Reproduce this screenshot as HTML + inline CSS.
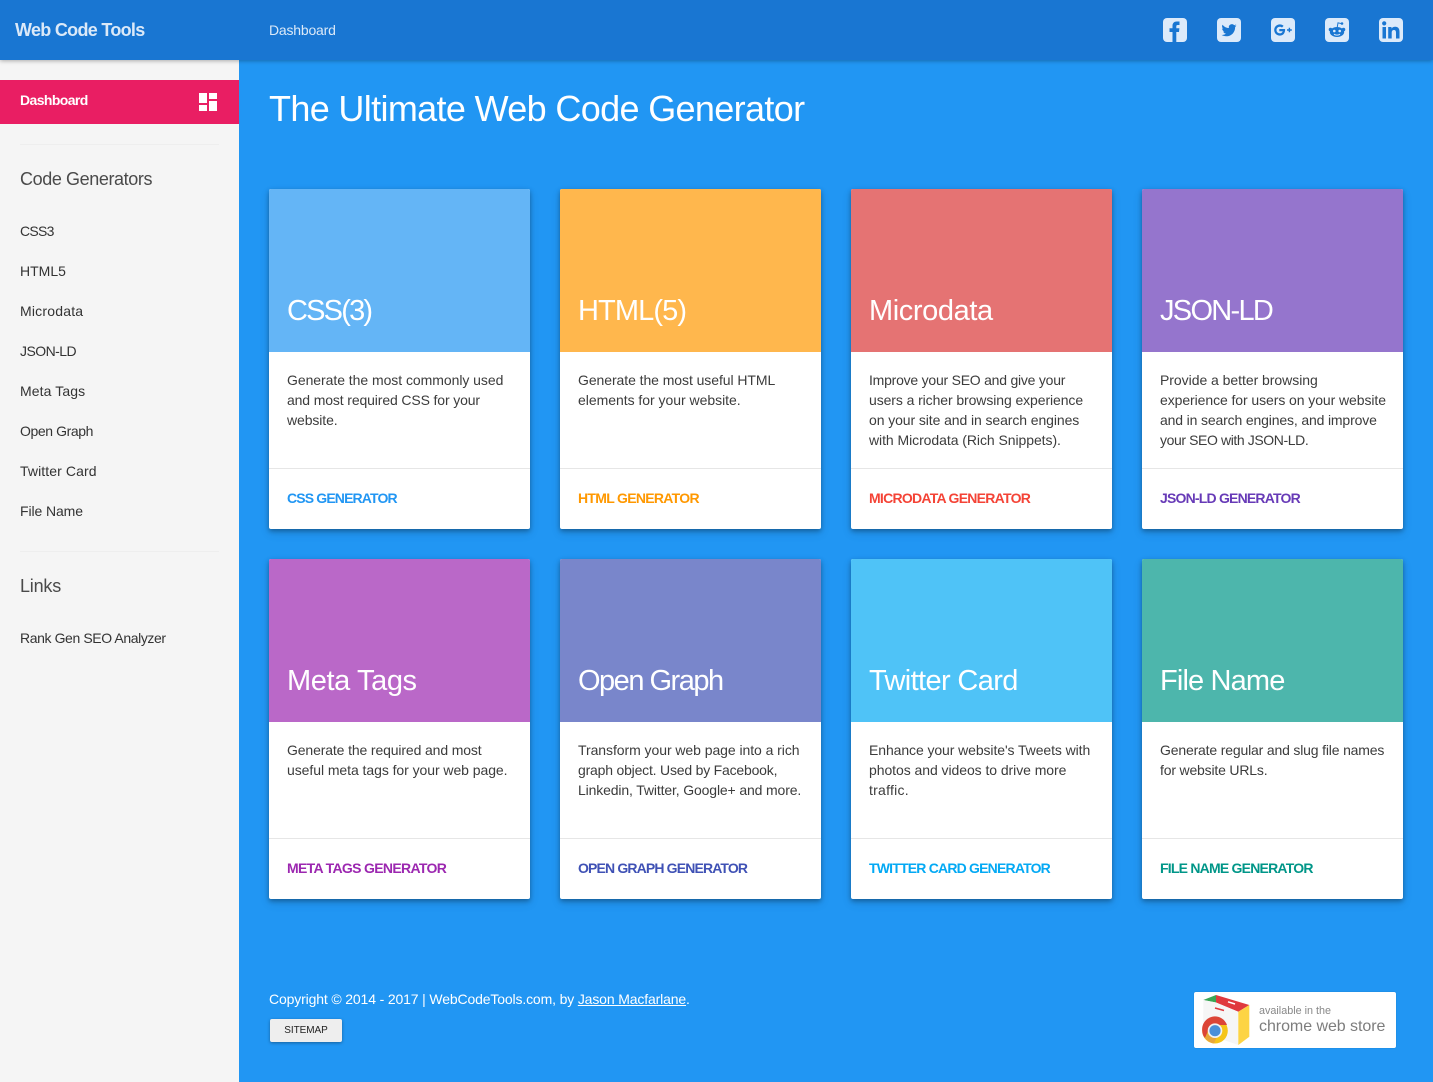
<!DOCTYPE html>
<html lang="en"><head><meta charset="utf-8"><title>Web Code Tools</title>
<style>
*{box-sizing:border-box}
html,body{margin:0;padding:0;width:1433px;height:1082px;overflow:hidden;background:#2196f3;font-family:"Liberation Sans",Arial,sans-serif}
a{text-decoration:none;color:inherit}
.abs{position:absolute;white-space:nowrap}
#top{position:absolute;left:0;top:0;width:1433px;height:60px;background:#1976d2;box-shadow:0 1px 4px rgba(0,0,0,.3);z-index:3}
#side{position:absolute;left:0;top:60px;width:239px;height:1022px;background:#f5f5f5;z-index:2}
.nav{position:absolute;left:20px;font-size:14px;line-height:20px;color:#333;white-space:nowrap}
.hd{position:absolute;left:20px;font-size:18px;line-height:24px;color:#4a4a4a;white-space:nowrap}
.hr{position:absolute;left:20px;width:199px;height:1px;background:#eeeeee}
.card{position:absolute;width:261px;height:340px;background:#fff;border-radius:2px;box-shadow:0 2px 5px rgba(0,0,0,.3),0 4px 10px rgba(0,0,0,.12)}
.ct{position:absolute;left:0;top:0;width:261px;height:163px;border-radius:2px 2px 0 0}
.ct span{position:absolute;left:18px;top:104px;font-size:29px;line-height:36px;color:#fff;white-space:nowrap}
.cb{position:absolute;left:18px;top:181px;font-size:14px;line-height:20px;color:#3c3c3c;white-space:nowrap}
.cl{position:absolute;left:0;top:279px;width:261px;height:1px;background:#e6e6e6}
.cf{position:absolute;left:18px;top:299px;font-size:14px;line-height:20px;font-weight:700;white-space:nowrap}
.ic{position:absolute;top:18px;width:24px;height:24px}
</style></head><body>
<div id="top">
<div class="abs" style="left:15px;top:18px;font-size:18px;line-height:24px;font-weight:700;color:#dbe9f8;letter-spacing:-.7px">Web Code Tools</div>
<div class="abs" style="left:269px;top:20px;font-size:14px;line-height:20px;color:#dbe9f8;letter-spacing:-.2px">Dashboard</div>
<svg class="ic" style="left:1163px" viewBox="0 0 24 24"><rect width="24" height="24" rx="4" fill="#dceafa"/><path d="M9.500 24V14H6.500V10.300H9.500V7.800C9.500 5 11.200 3.500 13.700 3.500H16.500V7H14.700C13.600 7 13.300 7.600 13.300 8.400V10.300H16.400L16 14H13.300V24Z" fill="#1976d2"/></svg>
<svg class="ic" style="left:1217px" viewBox="0 0 24 24"><rect width="24" height="24" rx="4" fill="#dceafa"/><path d="M19.600 7.600c-.6.3-1.200.4-1.800.5.7-.4 1.100-1 1.400-1.700-.6.4-1.300.6-2 .8a3.100 3.100 0 0 0-5.300 2.800c-2.600-.1-4.900-1.400-6.400-3.300-.8 1.400-.4 3.200 1 4.100-.5 0-1-.2-1.400-.4 0 1.500 1.100 2.800 2.500 3.100-.5.1-.9.1-1.400 0 .4 1.200 1.500 2.100 2.900 2.100a6.300 6.300 0 0 1-4.600 1.300c1.400.9 3 1.400 4.800 1.400 5.800 0 9-4.900 8.800-9.200.6-.5 1.100-1 1.500-1.700z" fill="#1976d2"/></svg>
<svg class="ic" style="left:1271px" viewBox="0 0 24 24"><rect width="24" height="24" rx="4" fill="#dceafa"/><path d="M8.300 11V13.200H11.700C11.400 14.500 10.300 15.300 8.800 15.300 6.900 15.300 5.500 13.900 5.500 12 5.500 10.100 7 8.700 8.800 8.700 9.700 8.700 10.400 9 11 9.500L12.600 7.900C11.600 7 10.300 6.400 8.800 6.400 5.700 6.400 3.200 8.900 3.200 12 3.200 15.100 5.700 17.600 8.800 17.600 12.200 17.600 14.300 15.100 14.100 11Z" fill="#1976d2"/><path d="M17.700 9.700H19.100V11.300H20.800V12.700H19.100V14.300H17.700V12.700H16V11.300H17.700Z" fill="#1976d2"/></svg>
<svg class="ic" style="left:1325px" viewBox="0 0 24 24"><rect width="24" height="24" rx="4" fill="#dceafa"/><ellipse cx="12" cy="14" rx="7.200" ry="5" fill="#1976d2"/><circle cx="5.500" cy="11.500" r="1.800" fill="#1976d2"/><circle cx="18.500" cy="11.500" r="1.800" fill="#1976d2"/><circle cx="9.300" cy="13" r="1.300" fill="#dceafa"/><circle cx="14.700" cy="13" r="1.300" fill="#dceafa"/><path d="M9 16.200C10.500 17.400 13.500 17.400 15 16.200" stroke="#dceafa" stroke-width="1" fill="none"/><path d="M12.200 9.500L13 4.800 16.500 5.600" stroke="#1976d2" stroke-width="1" fill="none"/><circle cx="17" cy="5.500" r="1.300" fill="#1976d2"/></svg>
<svg class="ic" style="left:1379px" viewBox="0 0 24 24"><rect width="24" height="24" rx="4" fill="#dceafa"/><rect x="3.500" y="9" width="3.500" height="11.500" fill="#1976d2"/><circle cx="5.200" cy="5.400" r="2.100" fill="#1976d2"/><path d="M9.200 9H12.500V10.600C13.100 9.500 14.400 8.700 16 8.700 19.300 8.700 20.500 10.800 20.500 14V20.500H17V14.700C17 13.100 16.500 12 15 12 13.400 12 12.700 13.100 12.700 14.700V20.500H9.200Z" fill="#1976d2"/></svg>
</div>

<div id="side">
<div style="position:absolute;left:0;top:20px;width:239px;height:44px;background:#e91e63"></div>
<div class="abs" style="left:20px;top:30px;font-size:14px;line-height:20px;font-weight:700;color:#fff;letter-spacing:-.6px">Dashboard</div>
<svg style="position:absolute;left:199px;top:33px" width="18" height="18" viewBox="0 0 18 18"><path d="M0 0H8V10H0ZM0 12H8V18H0ZM10 18H18V8H10ZM10 0V6H18V0Z" fill="#fff"/></svg>
<div class="hr" style="top:84px"></div>
<div class="hd" style="top:107px;letter-spacing:-.4px">Code Generators</div>
<div class="nav" style="top:161px;letter-spacing:-.7px">CSS3</div>
<div class="nav" style="top:201px">HTML5</div>
<div class="nav" style="top:241px;letter-spacing:.2px">Microdata</div>
<div class="nav" style="top:281px;letter-spacing:-.55px">JSON-LD</div>
<div class="nav" style="top:321px;letter-spacing:.1px">Meta Tags</div>
<div class="nav" style="top:361px;letter-spacing:-.4px">Open Graph</div>
<div class="nav" style="top:401px;letter-spacing:.1px">Twitter Card</div>
<div class="nav" style="top:441px;letter-spacing:-.1px">File Name</div>
<div class="hr" style="top:491px"></div>
<div class="hd" style="top:514px;letter-spacing:-.2px">Links</div>
<div class="nav" style="top:568px;letter-spacing:-.4px">Rank Gen SEO Analyzer</div>
</div>

<div class="abs" style="left:269px;top:86px;font-size:36px;line-height:46px;color:#fff;letter-spacing:-.65px">The Ultimate Web Code Generator</div>

<div class="card" style="left:269px;top:189px"><div class="ct" style="background:#64b5f6"><span style="letter-spacing:-1.800px">CSS(3)</span></div><div class="cb"><span style="letter-spacing:-.05px">Generate the most commonly used</span><br><span style="letter-spacing:-.13px">and most required CSS for your</span><br><span style="letter-spacing:-.1px">website.</span></div><div class="cl"></div><div class="cf" style="color:#2196f3;letter-spacing:-.85px">CSS GENERATOR</div></div>
<div class="card" style="left:560px;top:189px"><div class="ct" style="background:#ffb74d"><span style="letter-spacing:-.9px">HTML(5)</span></div><div class="cb"><span style="letter-spacing:-.07px">Generate the most useful HTML</span><br><span style="letter-spacing:-.03px">elements for your website.</span></div><div class="cl"></div><div class="cf" style="color:#ff9800;letter-spacing:-.7px">HTML GENERATOR</div></div>
<div class="card" style="left:851px;top:189px"><div class="ct" style="background:#e57373"><span style="letter-spacing:-.4px">Microdata</span></div><div class="cb"><span style="letter-spacing:-.23px">Improve your SEO and give your</span><br><span style="letter-spacing:-.09px">users a richer browsing experience</span><br><span style="letter-spacing:-.09px">on your site and in search engines</span><br><span style="letter-spacing:-.06px">with Microdata (Rich Snippets).</span></div><div class="cl"></div><div class="cf" style="color:#f44336;letter-spacing:-.73px">MICRODATA GENERATOR</div></div>
<div class="card" style="left:1142px;top:189px"><div class="ct" style="background:#9575cd"><span style="letter-spacing:-1.700px">JSON-LD</span></div><div class="cb"><span style="letter-spacing:-.04px">Provide a better browsing</span><br><span style="letter-spacing:-.08px">experience for users on your website</span><br><span style="letter-spacing:-.15px">and in search engines, and improve</span><br><span style="letter-spacing:-.4px">your SEO with JSON-LD.</span></div><div class="cl"></div><div class="cf" style="color:#673ab7;letter-spacing:-.8px">JSON-LD GENERATOR</div></div>

<div class="card" style="left:269px;top:559px"><div class="ct" style="background:#ba68c8"><span style="letter-spacing:-.4px">Meta Tags</span></div><div class="cb"><span style="letter-spacing:-.13px">Generate the required and most</span><br><span style="letter-spacing:-.06px">useful meta tags for your web page.</span></div><div class="cl"></div><div class="cf" style="color:#9c27b0;letter-spacing:-.67px">META TAGS GENERATOR</div></div>
<div class="card" style="left:560px;top:559px"><div class="ct" style="background:#7986cb"><span style="letter-spacing:-1.500px">Open Graph</span></div><div class="cb"><span style="letter-spacing:-.06px">Transform your web page into a rich</span><br><span style="letter-spacing:-.2px">graph object. Used by Facebook,</span><br><span style="letter-spacing:-.14px">Linkedin, Twitter, Google+ and more.</span></div><div class="cl"></div><div class="cf" style="color:#3f51b5;letter-spacing:-.85px">OPEN GRAPH GENERATOR</div></div>
<div class="card" style="left:851px;top:559px"><div class="ct" style="background:#4fc3f7"><span style="letter-spacing:-.63px">Twitter Card</span></div><div class="cb"><span style="letter-spacing:-.09px">Enhance your website's Tweets with</span><br><span style="letter-spacing:-.06px">photos and videos to drive more</span><br><span style="letter-spacing:.25px">traffic.</span></div><div class="cl"></div><div class="cf" style="color:#03a9f4;letter-spacing:-.8px">TWITTER CARD GENERATOR</div></div>
<div class="card" style="left:1142px;top:559px"><div class="ct" style="background:#4db6ac"><span style="letter-spacing:-.85px">File Name</span></div><div class="cb"><span style="letter-spacing:-.17px">Generate regular and slug file names</span><br><span style="letter-spacing:-.18px">for website URLs.</span></div><div class="cl"></div><div class="cf" style="color:#009688;letter-spacing:-.78px">FILE NAME GENERATOR</div></div>

<div class="abs" style="left:269px;top:989px;font-size:14px;line-height:20px;color:#fff;letter-spacing:-.145px">Copyright © 2014 - 2017 | WebCodeTools.com, by <a href="#" style="text-decoration:underline">Jason Macfarlane</a>.</div>
<div class="abs" style="left:270px;top:1019px;width:72px;height:23px;background:#eee;border-radius:2px;box-shadow:0 1px 3px rgba(0,0,0,.35);text-align:center;font-size:10px;line-height:23px;color:#222;letter-spacing:-.05px">SITEMAP</div>

<div class="abs" style="left:1194px;top:992px;width:202px;height:56px;background:#fff;border-radius:2px;box-shadow:0 0 1px rgba(0,0,0,.25)">
<svg style="position:absolute;left:0;top:0" width="60" height="56" viewBox="0 0 60 56">
<path d="M9.300 8L22 3V10.500Z" fill="#3aa655"/>
<path d="M22 3L55.300 13 44.300 19.700 22 10.500Z" fill="#e0393e"/>
<path d="M9.300 8L22 10.500 44.300 19.700V53L9.300 41Z" fill="#f6f6f6"/>
<path d="M44.300 19.700L55.300 13V44.700L44.300 53Z" fill="#fdd444"/>
<path d="M34 9.800L41 12" stroke="#fff" stroke-width="1.500"/>
<path d="M21 16L30 18.500" stroke="#e0393e" stroke-width="1.500"/>
<circle cx="21" cy="38.700" r="12.800" fill="#f5c518"/>
<path d="M8.200 38.700A12.800 12.800 0 0 1 33 33L21 33Q15 33 14 39L11 46Q8.200 43 8.200 38.700Z" fill="#dc4537"/>
<path d="M11 46Q14 50.500 20 51.500L23 44.500Q17 45 14 40Z" fill="#e8a63a"/>
<circle cx="21" cy="38.700" r="7.300" fill="#f2f2f2"/>
<circle cx="21" cy="38.700" r="5.600" fill="#4a8fd8"/>
</svg>
<div class="abs" style="left:65px;top:13px;font-size:10.800px;line-height:13px;color:#888">available in the</div>
<div class="abs" style="left:65px;top:25px;font-size:16px;line-height:20px;color:#7d7d7d;letter-spacing:-.05px">chrome web store</div>
</div>
</body></html>
